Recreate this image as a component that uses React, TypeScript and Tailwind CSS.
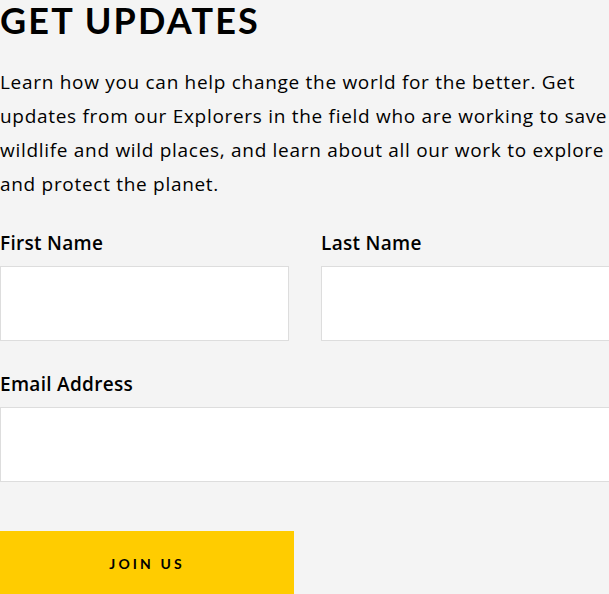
export default function App() {
  return (
    <div className="min-h-[594px] w-[609px] overflow-hidden bg-[#f4f4f4] text-black" style={{ fontFamily: '"Open Sans", Lato, sans-serif' }}>
      <div className="w-[610px]">
        {/* Heading */}
        <h2 className="text-[36px] leading-[40px] font-bold tracking-[0.06em] uppercase" style={{ fontFamily: 'Lato, sans-serif' }}>Get Updates</h2>

        {/* Intro */}
        <p className="mt-[25px] text-[19px] leading-[34px] tracking-[0.7px] pr-[2px]">
          Learn how you can help change the world for the better. Get updates from our Explorers in the field who are working to save wildlife and wild places, and learn about all our work to explore and protect the planet.
        </p>

        {/* Name fields */}
        <div className="mt-[28px] grid grid-cols-2 gap-x-[32px]">
          <label className="flex flex-col">
            <span className="text-[19px] leading-[28px] font-semibold tracking-[0.3px]">First Name</span>
            <input type="text" className="mt-[9px] h-[75px] w-full border border-[#dddddd] bg-white outline-none" />
          </label>
          <label className="flex flex-col">
            <span className="text-[19px] leading-[28px] font-semibold tracking-[0.3px]">Last Name</span>
            <input type="text" className="mt-[9px] h-[75px] w-full border border-[#dddddd] bg-white outline-none" />
          </label>
        </div>

        {/* Email */}
        <label className="mt-[29px] flex flex-col">
          <span className="text-[19px] leading-[28px] font-semibold tracking-[0.3px]">Email Address</span>
          <input type="email" className="mt-[9px] h-[75px] w-full border border-[#dddddd] bg-white outline-none" />
        </label>

        <button className="mt-[49px] h-[64px] w-[294px] bg-[#ffcc00] text-[14px] font-bold uppercase tracking-[0.22em]" style={{ fontFamily: 'Lato, sans-serif' }}>
          Join Us
        </button>
      </div>
    </div>
  )
}
